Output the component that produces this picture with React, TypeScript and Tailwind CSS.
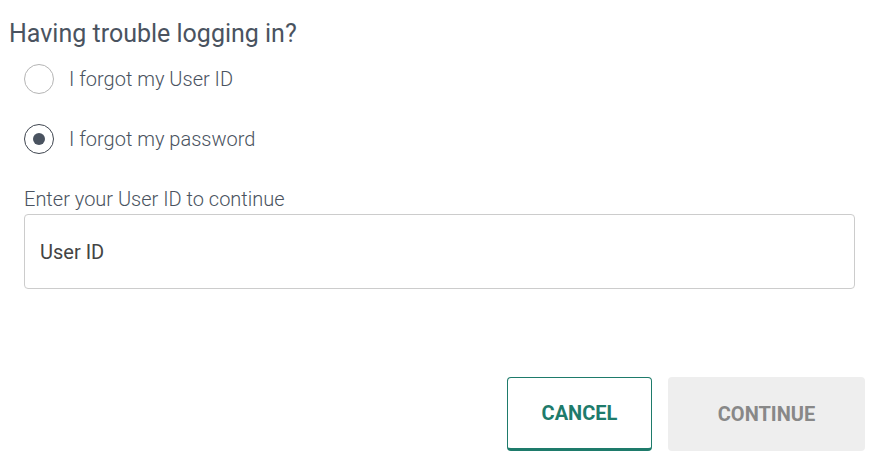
import React, { useState } from 'react';

export default function App() {
    const [choice, setChoice] = useState<'id' | 'password'>('password');

    const options = [
        { key: 'id' as const, label: 'I forgot my User ID' },
        { key: 'password' as const, label: 'I forgot my password' },
    ];

    return (
        <div className="w-[891px] h-[475px] bg-white font-['Roboto',sans-serif] text-[#4a5360]">
            <div className="pl-[9px] pr-[26px] pt-[19px]">
                <h1 className="text-[25px] leading-[30px] font-normal">Having trouble logging in?</h1>

                {/* Radio options */}
                <div className="pl-[15px] mt-[15px] flex flex-col gap-[30px]">
                    {options.map((opt) => (
                        <label key={opt.key} className="flex items-center gap-[15px] h-[30px] cursor-pointer" onClick={() => setChoice(opt.key)}>
                            <span className={`w-[30px] h-[30px] rounded-full border flex items-center justify-center ${choice === opt.key ? 'border-[#3f4650]' : 'border-[#b5b5b5]'}`}>
                                {choice === opt.key && <span className="w-[12px] h-[12px] rounded-full bg-[#4a5360]" />}
                            </span>
                            <span className="text-[20px] font-light">{opt.label}</span>
                        </label>
                    ))}
                </div>

                {/* User ID field */}
                <div className="pl-[15px] pr-[10px] mt-[33px]">
                    <p className="text-[20px] font-light leading-[24px]">Enter your User ID to continue</p>
                    <input
                        placeholder="User ID"
                        className="mt-[3px] w-full h-[75px] border border-[#cccccc] rounded-[4px] px-[15px] text-[20px] text-[#444] placeholder:text-[#444] outline-none"
                    />
                </div>

                {/* Actions */}
                <div className="flex justify-end gap-[16px] mt-[88px]">
                    <button className="w-[145px] h-[74px] rounded-[4px] border border-[#1e7b6b] border-b-[3px] bg-white text-[#1e7b6b] text-[20px] font-bold">
                        CANCEL
                    </button>
                    <button className="w-[197px] h-[74px] rounded-[4px] bg-[#eeeeee] text-[#888888] text-[20px] font-bold">
                        CONTINUE
                    </button>
                </div>
            </div>
        </div>
    );
}
